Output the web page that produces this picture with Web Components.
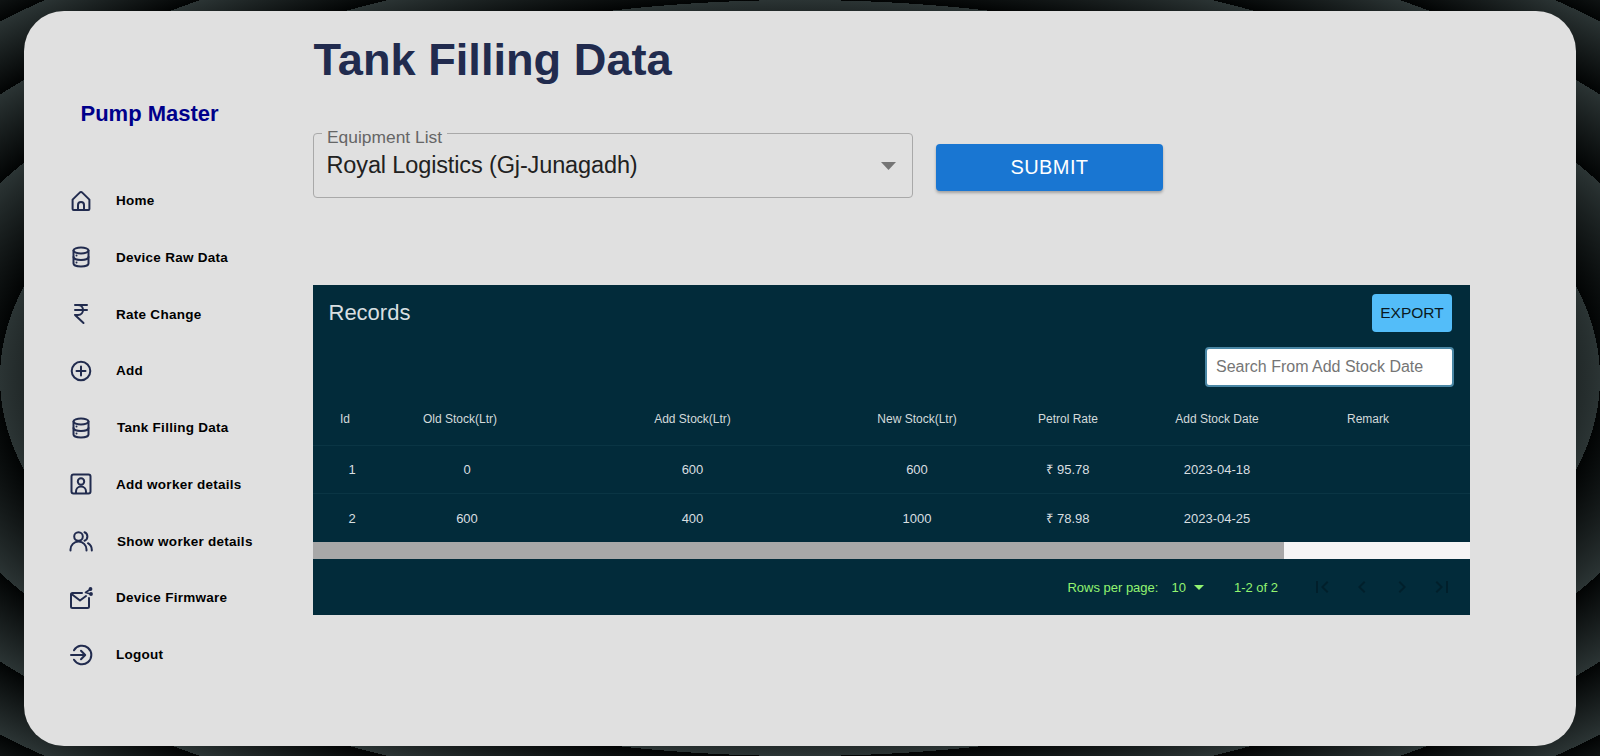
<!DOCTYPE html>
<html lang="en">
<head>
<meta charset="utf-8">
<title>Tank Filling Data</title>
<style>
	html, body { height: 100%; }
	body {
		margin: 0;
		overflow: hidden;
		font-family: "Liberation Sans", Arial, sans-serif;
		background: repeating-radial-gradient(ellipse 800px 378px at 50% 50%, #020404 0%, #2b3434 12.5%);
	}
</style>
</head>
<body>
<app-shell>
	<side-nav slot="nav">
		<nav-item icon="home">Home</nav-item>
		<nav-item icon="database">Device Raw Data</nav-item>
		<nav-item icon="rupee">Rate Change</nav-item>
		<nav-item icon="plus">Add</nav-item>
		<nav-item icon="database" nudge>Tank Filling Data</nav-item>
		<nav-item icon="worker">Add worker details</nav-item>
		<nav-item icon="users" nudge>Show worker details</nav-item>
		<nav-item icon="mail">Device Firmware</nav-item>
		<nav-item icon="logout">Logout</nav-item>
	</side-nav>
	<h1 slot="title" style="margin:0 0 0 .5px;font-size:45.200px;line-height:52px;font-weight:700;color:#212b4e">Tank Filling Data</h1>
	<equipment-form slot="form"></equipment-form>
	<records-table slot="table"></records-table>
</app-shell>

<script>
//////////////////////////////////////////// App Shell ///////////////////////////////////////////
class AppShell extends HTMLElement {
	constructor(...args) {
		super(...args);
		this.attachShadow({ mode: 'open' }).innerHTML = `
<style>
	:host { display: block; padding: 11px 24px 10px; height: 735px; }
	.card { display: flex; height: 100%; background: #e0e0e0; border-radius: 40px; }
	.nav { width: 289px; flex: none; }
	main { flex: 1; min-width: 0; padding-top: 23px; }
	.form { margin-top: 47px; }
	.table { margin-top: 87px; width: 1157px; }
	::slotted([slot="table"]) { display: block; }
</style>
<div class="card">
	<div class="nav"><slot name="nav"></slot></div>
	<main>
		<slot name="title"></slot>
		<div class="form"><slot name="form"></slot></div>
		<div class="table"><slot name="table"></slot></div>
	</main>
</div>`;
	}
}
customElements.define("app-shell", AppShell);

//////////////////////////////////////////// Side Nav ////////////////////////////////////////////
class SideNav extends HTMLElement {
	constructor(...args) {
		super(...args);
		this.attachShadow({ mode: 'open' }).innerHTML = `
<style>
	:host { display: block; }
	.brand { padding: 90px 0 0 56.500px; height: 26px; font-size: 22px; line-height: 26px; font-weight: 700; color: #00008b; }
	nav { margin-top: 45.300px; }
</style>
<div class="brand">Pump Master</div>
<nav><slot></slot></nav>`;
	}
}
customElements.define("side-nav", SideNav);

const ICONS = {
	home: `<path d="M3.600 10.600 10.700 3.600a1.800 1.800 0 0 1 2.600 0L20.400 10.600V20a1 1 0 0 1-1 1H4.600a1 1 0 0 1-1-1Z"/><path d="M9 21v-5a3 3 0 0 1 6 0v5"/>`,
	database: `<ellipse cx="12" cy="5.500" rx="7.500" ry="3"/><path d="M4.500 5.500v13c0 1.700 3.400 3 7.500 3s7.500-1.300 7.500-3v-13"/><path d="M4.500 12c0 1.700 3.400 3 7.500 3s7.500-1.300 7.500-3"/><path d="M7.500 10.500h.01M7.500 17.500h.01"/>`,
	rupee: `<path d="M6 3h12M6 8h12M6 13l8.500 8M6 13h3M9 13c6.667 0 6.667-10 0-10"/>`,
	plus: `<circle cx="12" cy="12" r="9.300"/><path d="M12 7.500v9M7.500 12h9"/>`,
	worker: `<rect x="2.500" y="2.500" width="19" height="19" rx="2"/><circle cx="12" cy="9.500" r="3.200"/><path d="M7 21v-1.500a5 5 0 0 1 10 0V21"/>`,
	users: `<circle cx="9.500" cy="7.500" r="4.300"/><path d="M1.500 21.500v-1a8 8 0 0 1 16 0v1"/><path d="M15.500 3.300a4.500 4.500 0 0 1 0 8.400"/><path d="M19 14.200a8 8 0 0 1 3.800 7.300"/>`,
	mail: `<path d="M13 7H3.500A1.500 1.500 0 0 0 2 8.500v12A1.500 1.500 0 0 0 3.500 22h15a1.500 1.500 0 0 0 1.500-1.500V12"/><path d="m2.500 8 8.500 6.500 6-4.500"/><path d="m16.500 6.500 4.500-3M16.500 6.500l5 1.500" stroke-width="1.600"/><circle cx="21.500" cy="3" r=".9" fill="currentColor"/><circle cx="22" cy="8" r=".9" fill="currentColor"/>`,
	logout: `<path d="M5 7.300a9.300 9.300 0 1 1 0 9.400"/><path d="M2 12h14M12 7.800l4.200 4.200-4.200 4.200"/>`
};

//////////////////////////////////////////// Nav Item ////////////////////////////////////////////
class NavItem extends HTMLElement {
	constructor(...args) {
		super(...args);
		this._shadow = this.attachShadow({ mode: 'open' });
	}

	connectedCallback() {
		const icon = ICONS[this.getAttribute("icon")];
		this._shadow.innerHTML = `
<style>
	:host { display: flex; align-items: center; height: 56.750px; padding-left: 45px; font-size: 13.500px; font-weight: 700; letter-spacing: .27px; color: #000; }
	svg { width: 24px; height: 24px; flex: none; fill: none; stroke: #212b4e; color: #212b4e; stroke-width: 2; stroke-linecap: round; stroke-linejoin: round; }
	span { margin-left: 23px; }
	:host([nudge]) span { margin-left: 24px; }
</style>
<svg viewBox="0 0 24 24">${icon}</svg><span><slot></slot></span>`;
	}
}
customElements.define("nav-item", NavItem);

////////////////////////////////////////// Equipment Form ////////////////////////////////////////
class EquipmentForm extends HTMLElement {
	constructor(...args) {
		super(...args);
		this.attachShadow({ mode: 'open' }).innerHTML = `
<style>
	:host { display: flex; align-items: flex-start; gap: 23px; font-family: "Liberation Sans", Arial, sans-serif; }
	.select { position: relative; box-sizing: border-box; width: 600px; height: 65px; display: flex; align-items: center; justify-content: space-between; padding: 0 16px 0 12.500px; border: 1px solid #a9a9a9; border-radius: 4px; font-size: 23.500px; letter-spacing: -.13px; color: #212121; }
	label { position: absolute; left: 8px; top: -6px; padding: 0 5px; font-size: 17.400px; letter-spacing: 0; line-height: 18px; color: #666; background: #e0e0e0; }
	svg { width: 15px; height: 8px; fill: #757575; }
	button { margin-top: 11px; width: 227px; height: 47px; border: 0; border-radius: 4px; background: #1976d2; color: #fff; font: 20px "Liberation Sans", Arial, sans-serif; letter-spacing: .4px; box-shadow: 0 2px 3px rgba(0,0,0,.28); }
</style>
<div class="select"><label>Equipment List</label><span>Royal Logistics (Gj-Junagadh)</span><svg viewBox="0 0 15 8"><path d="M0 0h15L7.500 8z"/></svg></div>
<button>SUBMIT</button>`;
	}
}
customElements.define("equipment-form", EquipmentForm);

////////////////////////////////////////// Records Table /////////////////////////////////////////
const COLUMNS = ["Id", "Old Stock(Ltr)", "Add Stock(Ltr)", "New Stock(Ltr)", "Petrol Rate", "Add Stock Date", "Remark"];
const ROWS = [
	["1", "0", "600", "600", "₹ 95.78", "2023-04-18", ""],
	["2", "600", "400", "1000", "₹ 78.98", "2023-04-25", ""]
];

class RecordsTable extends HTMLElement {
	constructor(...args) {
		super(...args);
		const cells = (row) => row.map((c) => `<div>${c}</div>`).join("");
		this.attachShadow({ mode: 'open' }).innerHTML = `
<style>
	:host { display: block; background: #022b3a; color: #d8dfe1; font-family: "Liberation Sans", Arial, sans-serif; }
	.top { display: flex; justify-content: space-between; align-items: center; height: 62px; padding: 0 18px 0 15.500px; box-sizing: border-box; }
	.top h2 { margin: 0; font-size: 22px; font-weight: 400; position: relative; top: -3.500px; }
	.export { width: 80px; height: 38px; padding: 0; border: 0; border-radius: 4px; background: #53bdf9; color: #0a1a22; font: 15.500px "Liberation Sans", Arial, sans-serif; position: relative; top: -3px; }
	.search { display: flex; justify-content: flex-end; padding-right: 16px; }
	.search input { box-sizing: border-box; width: 249px; height: 40px; padding: 0 9px; border: 2px solid #4a87a5; border-radius: 4px; background: #fff; font: 16px "Liberation Sans", Arial, sans-serif; outline: none; }
	.search input::placeholder { color: #757575; opacity: 1; }
	.row { display: grid; grid-template-columns: 78px 152px 299px 150px 152px 146px 1fr; align-items: center; text-align: center; line-height: 16px; }
	.head { box-sizing: border-box; height: 59px; padding-top: 6px; font-size: 12px; color: #d3dadb; border-bottom: 1px solid #0a3544; }
	.head > :nth-child(-n+2) { padding-right: 14px; }
	.head > :last-child, .body > :last-child { padding-right: 24px; }
	.body { height: 48px; font-size: 13px; color: #d9dfe0; border-bottom: 1px solid #0a3544; box-sizing: border-box; }
	.body + .body { border-bottom: 0; padding-top: 1px; }
	.bar { height: 17px; background: #f5f5f5; }
	.bar div { width: 971px; height: 100%; background: #a8a8a8; }
	.foot { display: flex; align-items: center; justify-content: flex-end; height: 56px; padding-right: 16px; font-size: 13px; color: #92f470; }
	.foot .size { margin-left: 13px; display: flex; align-items: center; gap: 8px; }
	.foot .size svg { width: 10px; height: 5px; fill: #92f470; }
	.foot .range { margin-left: 30px; }
	.pager { margin-left: 32px; display: flex; gap: 16px; }
	.pager svg { width: 24px; height: 24px; fill: rgba(0,0,0,.26); }
</style>
<div class="top"><h2>Records</h2><button class="export">EXPORT</button></div>
<div class="search"><input placeholder="Search From Add Stock Date"></div>
<div class="row head">${cells(COLUMNS)}</div>
${ROWS.map((r) => `<div class="row body">${cells(r)}</div>`).join("")}
<div class="bar"><div></div></div>
<div class="foot">
	<span>Rows per page:</span>
	<span class="size">10 <svg viewBox="0 0 10 5"><path d="M0 0h10L5 5z"/></svg></span>
	<span class="range">1-2 of 2</span>
	<span class="pager">
		<svg viewBox="0 0 24 24"><path d="M18.410 16.590 13.820 12l4.590-4.590L17 6l-6 6 6 6zM6 6h2v12H6z"/></svg>
		<svg viewBox="0 0 24 24"><path d="M15.410 7.410 14 6l-6 6 6 6 1.410-1.410L10.830 12z"/></svg>
		<svg viewBox="0 0 24 24"><path d="M10 6 8.590 7.410 13.170 12l-4.580 4.590L10 18l6-6z"/></svg>
		<svg viewBox="0 0 24 24"><path d="M5.590 7.410 10.180 12l-4.590 4.590L7 18l6-6-6-6zM16 6h2v12h-2z"/></svg>
	</span>
</div>`;
	}
}
customElements.define("records-table", RecordsTable);
</script>
</body>
</html>
